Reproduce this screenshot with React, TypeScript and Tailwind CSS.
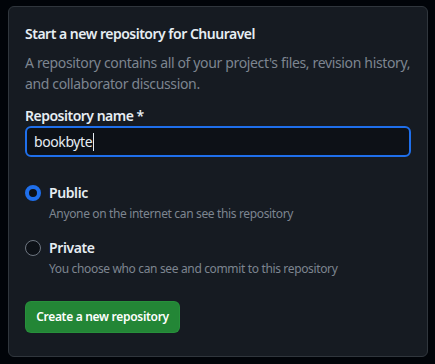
import React from "react";

export default function App() {
  return (
    <div
      className="w-[435px] h-[364px] bg-[#010409] pt-[6px] pl-[8px]"
      style={{ fontFamily: '"Noto Sans", "Liberation Sans", sans-serif' }}
    >
      <div className="w-[420px] h-[351px] rounded-[6px] border border-[#30363d] bg-[#161b22] px-4 pt-4">
        <h2 className="text-[14px] leading-[21px] font-semibold tracking-[-0.5px] text-[#e6edf3]">
          Start a new repository for Chuuravel
        </h2>
        <p className="mt-[8px] text-[14px] leading-[21px] tracking-[-0.35px] text-[#7d8590]">
          A repository contains all of your project's files, revision history,
          and collaborator discussion.
        </p>
        <label className="mt-[11px] block text-[14px] leading-[21px] font-semibold tracking-[-0.5px] text-[#e6edf3]">
          Repository name *
        </label>
        <div className="mt-0 flex h-[31px] w-[386px] items-center rounded-[6px] border-2 border-[#1f6feb] bg-[#0d1117] pl-[7px] text-[14px] tracking-[-0.4px] text-[#e6edf3]">
          bookbyte<span className="ml-[1px] inline-block h-[18px] w-[1px] bg-[#e6edf3]" />
        </div>

        <div className="mt-[26px] flex flex-col gap-[15px]">
          <div>
            <div className="flex items-center gap-[8px]">
              <span className="box-border h-[16px] w-[16px] rounded-full border-[4px] border-[#1f6feb] bg-[#0d1117]" />
              <span className="text-[14px] leading-[20px] font-semibold tracking-[-0.4px] text-[#e6edf3]">Public</span>
            </div>
            <div className="mt-[2px] pl-[24px] text-[12px] leading-[18px] tracking-[-0.35px] text-[#7d8590]">
              Anyone on the internet can see this repository
            </div>
          </div>
          <div>
            <div className="flex items-center gap-[8px]">
              <span className="box-border h-[16px] w-[16px] rounded-full border border-[#6e7681] bg-[#0d1117]" />
              <span className="text-[14px] leading-[20px] font-semibold tracking-[-0.4px] text-[#e6edf3]">Private</span>
            </div>
            <div className="mt-[2px] pl-[24px] text-[12px] leading-[18px] tracking-[-0.35px] text-[#7d8590]">
              You choose who can see and commit to this repository
            </div>
          </div>
        </div>

        <button className="mt-[23px] flex h-[32px] w-[155px] items-center justify-center rounded-[6px] border border-[#2ea04366] bg-[#238636] text-[12px] font-semibold tracking-[-0.3px] text-white">
          Create a new repository
        </button>
      </div>
    </div>
  );
}
